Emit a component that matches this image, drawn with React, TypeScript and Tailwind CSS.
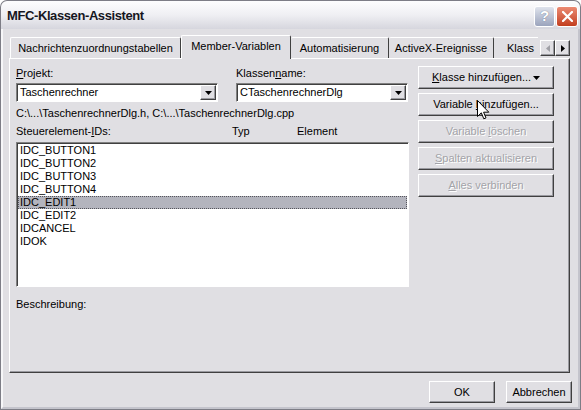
import React from "react";

const raised =
  "border border-t-white border-l-white border-r-[#404040] border-b-[#404040] shadow-[inset_-1px_-1px_0_#9a9aa0]";
const sunken =
  "border border-t-[#808080] border-l-[#808080] border-r-white border-b-white shadow-[inset_1px_1px_0_#404040]";

const DownTri = ({ color = "#000" }: { color?: string }) => (
  <svg width="7" height="4" viewBox="0 0 7 4">
    <path d="M0 0H7L3.5 4Z" fill={color} />
  </svg>
);

const Combo = ({ value, width }: { value: string; width: string }) => (
  <div className={`${sunken} ${width} h-[19px] bg-white flex items-center pl-[3px] pr-[1px]`}>
    <span className="flex-1 truncate">{value}</span>
    <div className={`${raised} w-[16px] h-[15px] bg-[#e0dfe3] flex items-center justify-center`}>
      <DownTri />
    </div>
  </div>
);

const Btn = ({
  children,
  disabled,
  className = "",
}: {
  children: React.ReactNode;
  disabled?: boolean;
  className?: string;
}) => (
  <div
    className={`${raised} h-[23px] bg-[#e0dfe3] flex items-center justify-center ${
      disabled ? "text-[#a3a3a8] [text-shadow:1px_1px_0_#fff]" : "text-black"
    } ${className}`}
  >
    {children}
  </div>
);

const U = ({ children }: { children: React.ReactNode }) => (
  <span className="underline underline-offset-[1px]">{children}</span>
);

const items = [
  "IDC_BUTTON1",
  "IDC_BUTTON2",
  "IDC_BUTTON3",
  "IDC_BUTTON4",
  "IDC_EDIT1",
  "IDC_EDIT2",
  "IDCANCEL",
  "IDOK",
];

export default function App() {
  return (
    <div className="relative w-[581px] h-[410px] overflow-hidden bg-white font-['Liberation_Sans',Arial,sans-serif] text-[11px] text-black flex flex-col">
      {/* title bar */}
      <div className="h-[29px] shrink-0 rounded-t-[7px] border-x border-t border-[#7d7d86] bg-gradient-to-b from-[#fdfdfe] via-[#efeff3] to-[#d6d6de] flex items-start justify-between">
        <div className="mt-[7px] ml-[6px] text-[13px] font-bold tracking-[-0.4px] leading-[16px] text-[#16161e]">
          MFC-Klassen-Assistent
        </div>
        <div className="mt-[5px] mr-[2px] flex gap-[1px]">
          <div className="w-[21px] h-[21px] rounded-[3px] border border-white bg-gradient-to-b from-[#dfe3ec] to-[#9ba4bd] flex items-center justify-center text-[15px] font-bold text-white [text-shadow:0_0_1px_#59627a]">
            ?
          </div>
          <div className="w-[22px] h-[21px] rounded-[3px] border border-white bg-gradient-to-b from-[#eb8a72] to-[#c23d1d] flex items-center justify-center">
            <svg width="11" height="11" viewBox="0 0 11 11">
              <path d="M1 1L10 10M10 1L1 10" stroke="#fff" strokeWidth="2.2" strokeLinecap="round" />
            </svg>
          </div>
        </div>
      </div>

      {/* body with frame */}
      <div className="flex-1 border-x border-b border-[#7d7d86]">
        <div className="h-full border-l-2 border-r-2 border-b-2 border-l-[#f6f6f8] border-r-[#c4c4cc] border-b-[#c4c4cc] bg-[#e0dfe3] flex flex-col">
          {/* tab strip */}
          <div className="mt-[6px] ml-[6px] mr-[8px] h-[23px] flex items-start">
            <div className="ml-[1px] mt-[2px] w-[171px] h-[21px] border-t border-l border-r border-t-white border-l-white border-r-[#404040] rounded-t-[2px] flex items-center justify-center">
              Nachrichtenzuordnungstabellen
            </div>
            <div className="relative z-10 w-[110px] h-[24px] bg-[#e0dfe3] border-t border-l border-r border-t-white border-l-white border-r-[#404040] rounded-t-[2px] flex items-center justify-center pb-[2px]">
              Member-Variablen
            </div>
            <div className="mt-[2px] w-[98px] h-[21px] border-t border-r border-t-white border-r-[#404040] rounded-t-[2px] flex items-center justify-center">
              Automatisierung
            </div>
            <div className="mt-[2px] w-[105px] h-[21px] border-t border-r border-t-white border-r-[#404040] rounded-t-[2px] flex items-center justify-center">
              ActiveX-Ereignisse
            </div>
            <div className="mt-[2px] w-[44px] h-[21px] border-t border-t-white whitespace-nowrap flex items-center pl-[13px]">
              Klass
            </div>
            <div className="ml-[2px] mt-[5px] flex">
              <div className={`${raised} w-[15px] h-[16px] bg-[#e0dfe3] flex items-center justify-center`}>
                <svg width="4" height="7" viewBox="0 0 4 7">
                  <path d="M4 0V7L0 3.5Z" fill="#a0a0a6" />
                </svg>
              </div>
              <div className={`${raised} w-[15px] h-[16px] bg-[#e0dfe3] flex items-center justify-center`}>
                <svg width="4" height="7" viewBox="0 0 4 7">
                  <path d="M0 0V7L4 3.5Z" fill="#000" />
                </svg>
              </div>
            </div>
          </div>

          {/* tab panel */}
          <div className="mx-[6px] mr-[8px] h-[315px] border border-t-white border-l-white border-r-[#404040] border-b-[#404040] shadow-[inset_-1px_-1px_0_#9a9aa0] flex pl-[6px]">
            {/* left column */}
            <div className="w-[393px] flex flex-col">
              <div className="mt-[7px] h-[14px] leading-[14px] flex">
                <div className="w-[220px]">
                  <U>P</U>rojekt:
                </div>
                <div>
                  Klassen<U>n</U>ame:
                </div>
              </div>
              <div className="mt-[3px] flex">
                <Combo value="Taschenrechner" width="w-[202px]" />
                <div className="w-[18px]" />
                <Combo value="CTaschenrechnerDlg" width="w-[172px]" />
              </div>
              <div className="mt-[4px] h-[14px] leading-[14px]">
                {"C:\\...\\TaschenrechnerDlg.h, C:\\...\\TaschenrechnerDlg.cpp"}
              </div>
              <div className="mt-[4px] h-[14px] leading-[14px] flex">
                <div className="w-[216px]">
                  Steuerelement-<U>I</U>Ds:
                </div>
                <div className="w-[65px]">Typ</div>
                <div>Element</div>
              </div>
              <div className={`${sunken} mt-[4px] h-[145px] bg-white p-[1px]`}>
                {items.map((it) => (
                  <div
                    key={it}
                    className={`h-[13px] leading-[13px] pl-[2px] ${
                      it === "IDC_EDIT1" ? "bg-[#b3b4bd] outline outline-1 outline-dotted outline-[#55555c] -outline-offset-1" : ""
                    }`}
                  >
                    {it}
                  </div>
                ))}
              </div>
              <div className="mt-[10px] h-[14px] leading-[14px]">Beschreibung:</div>
            </div>

            {/* right column */}
            <div className="ml-[9px] mt-[7px] w-[136px] flex flex-col gap-[4px]">
              <Btn className="justify-start pl-[13px] pr-[13px]">
                <span className="flex-1">
                  <U>K</U>lasse hinzufügen...
                </span>
                <DownTri />
              </Btn>
              <Btn>
                <span>
                  Variable <U>h</U>inzufügen...
                </span>
              </Btn>
              <Btn disabled>
                <span>
                  Variable <U>l</U>öschen
                </span>
              </Btn>
              <Btn disabled>
                <span>
                  <U>S</U>palten aktualisieren
                </span>
              </Btn>
              <Btn disabled>
                <span>
                  <U>A</U>lles verbinden
                </span>
              </Btn>
            </div>
          </div>

          {/* bottom buttons */}
          <div className="mt-[8px] pr-[6px] flex justify-end gap-[11px]">
            <div className={`${raised} w-[66px] h-[22px] flex items-center justify-center`}>OK</div>
            <div className={`${raised} w-[66px] h-[22px] flex items-center justify-center`}>Abbrechen</div>
          </div>
        </div>
      </div>

      {/* mouse pointer */}
      <svg className="absolute left-[477px] top-[100px]" width="13" height="21" viewBox="0 0 13 21">
        <path
          d="M0.5 0.5V16.5L4.3 12.8L6.8 18.8L9 17.9L6.6 12.2H11.8Z"
          fill="#fff"
          stroke="#000"
          strokeWidth="1"
          strokeLinejoin="miter"
        />
      </svg>
    </div>
  );
}
